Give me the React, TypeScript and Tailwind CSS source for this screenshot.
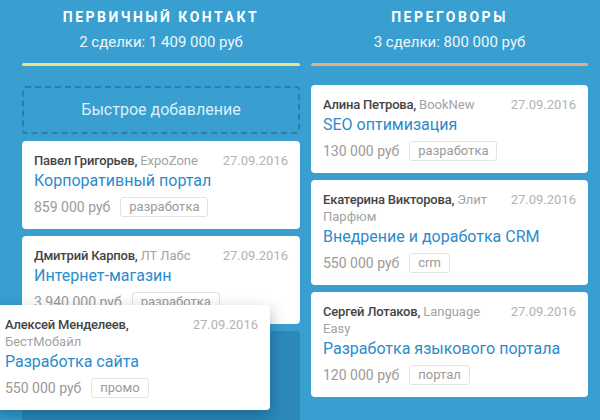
type Deal = {
  name: string;
  company: string;
  date: string;
  title: string;
  price: string;
  tag: string;
};

const leftDeals: Deal[] = [
  {
    name: "Павел Григорьев,",
    company: "ExpoZone",
    date: "27.09.2016",
    title: "Корпоративный портал",
    price: "859 000 руб",
    tag: "разработка",
  },
  {
    name: "Дмитрий Карпов,",
    company: "ЛТ Лабс",
    date: "27.09.2016",
    title: "Интернет-магазин",
    price: "3 940 000 руб",
    tag: "разработка",
  },
];

const rightDeals: Deal[] = [
  {
    name: "Алина Петрова,",
    company: "BookNew",
    date: "27.09.2016",
    title: "SEO оптимизация",
    price: "130 000 руб",
    tag: "разработка",
  },
  {
    name: "Екатерина Викторова,",
    company: "Элит Парфюм",
    date: "27.09.2016",
    title: "Внедрение и доработка CRM",
    price: "550 000 руб",
    tag: "crm",
  },
  {
    name: "Сергей Лотаков,",
    company: "Language Easy",
    date: "27.09.2016",
    title: "Разработка языкового портала",
    price: "120 000 руб",
    tag: "портал",
  },
];

const dragged: Deal = {
  name: "Алексей Менделеев,",
  company: "БестМобайл",
  date: "27.09.2016",
  title: "Разработка сайта",
  price: "550 000 руб",
  tag: "промо",
};

export default function App() {
  return (
    <main
      className="relative h-[420px] w-[600px] overflow-hidden bg-[#389fd0]"
      style={{ fontFamily: 'Roboto, "Noto Sans", sans-serif' }}
    >
      <div className="flex items-start gap-[11px] pl-[22px]">
        <section className="flex w-[278px] flex-col">
          <ColumnHeader
            title="Первичный контакт"
            summary="2 сделки: 1 409 000 руб"
            lineColor="bg-[#f3e188]"
          />

          <div className="mt-[20px] flex flex-col gap-[7px]">
            <div className="flex h-[48px] items-center justify-center rounded-[3px] border-2 border-dashed border-[#2a80ad] text-[16px] text-[#dcf0fa]">
              Быстрое добавление
            </div>

            {leftDeals.map((deal) => (
              <DealCard key={deal.title} deal={deal} />
            ))}

            {/* drop placeholder */}
            <div className="h-[100px] rounded-[4px] bg-[#2c8abb]" />
          </div>
        </section>

        <section className="flex w-[277px] flex-col">
          <ColumnHeader
            title="Переговоры"
            summary="3 сделки: 800 000 руб"
            lineColor="bg-[#e9ad80]"
          />

          <div className="mt-[19px] flex flex-col gap-[7px]">
            {rightDeals.map((deal) => (
              <DealCard key={deal.title} deal={deal} />
            ))}
          </div>
        </section>
      </div>

      {/* card being dragged */}
      <div className="absolute left-[-7px] top-[305px] w-[277px] rounded-[4px] shadow-[0_6px_16px_rgba(0,40,70,0.35)]">
        <DealCard deal={dragged} />
      </div>
    </main>
  );
}

function ColumnHeader({
  title,
  summary,
  lineColor,
}: {
  title: string;
  summary: string;
  lineColor: string;
}) {
  return (
    <div className="pt-[8px] text-center text-white">
      <h2 className="text-[14px] font-bold uppercase leading-[18px] tracking-[0.18em]">
        {title}
      </h2>
      <p className="mt-[6px] text-[15px] leading-[20px] text-[#eef7fc]">
        {summary}
      </p>
      <div className={`mt-[11px] h-[3px] rounded-full ${lineColor}`} />
    </div>
  );
}

function DealCard({ deal }: { deal: Deal }) {
  return (
    <div className="rounded-[4px] bg-white px-[12px] pb-[11px] pt-[11px]">
      <div className="flex items-start justify-between gap-[8px] text-[13px] leading-[17px] tracking-[-0.2px]">
        <div>
          <span className="font-medium text-[#444444]">{deal.name}</span>{" "}
          <span className="text-[#a3a3a3] tracking-normal">{deal.company}</span>
        </div>
        <span className="shrink-0 text-[#b3b3b3] tracking-normal">
          {deal.date}
        </span>
      </div>

      <div className="text-[16px] leading-[24px] text-[#2b8bcb]">
        {deal.title}
      </div>

      <div className="mt-[3px] flex items-center gap-[10px] text-[14px] text-[#9a9a9a]">
        <span>{deal.price}</span>
        <span className="my-[1px] flex h-[20px] items-center rounded-[3px] border border-[#e2e2e2] px-[8px] text-[13px]">
          {deal.tag}
        </span>
      </div>
    </div>
  );
}
